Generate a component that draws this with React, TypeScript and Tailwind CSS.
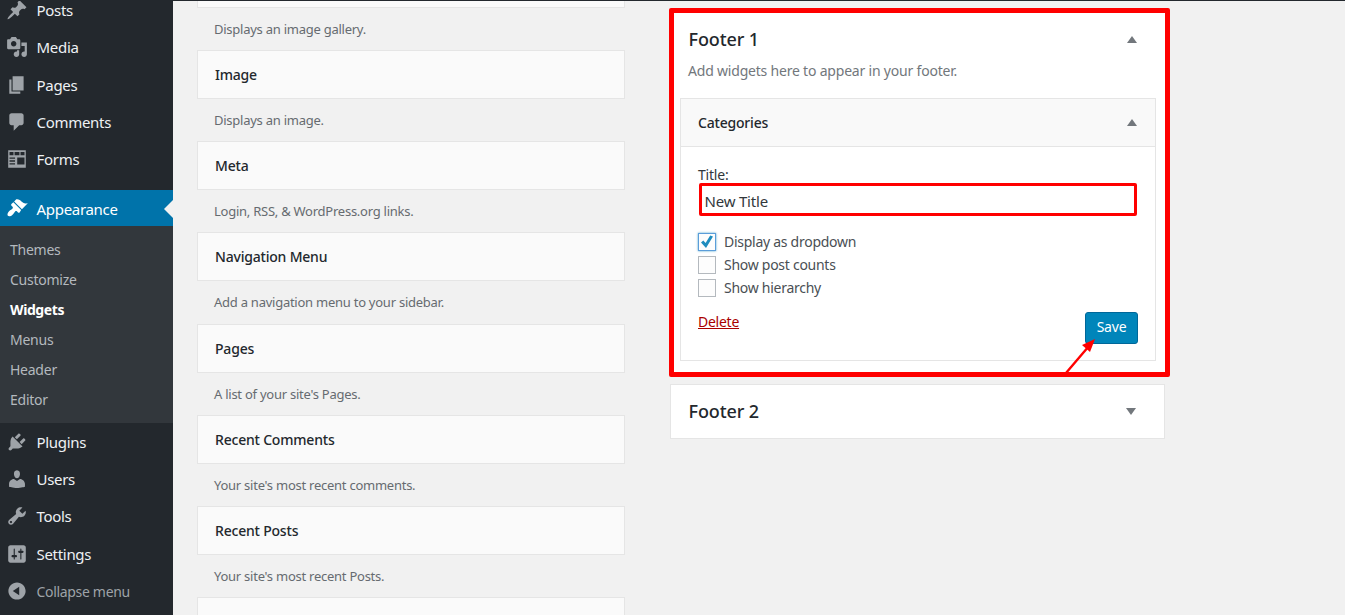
import React from "react";

const icons: Record<string, string> = {
  posts: "M10.44 3.02l1.82-1.82 6.36 6.35-1.83 1.82c-1.05-.68-2.48-.57-3.41.36l-.75.75c-.92.93-1.04 2.35-.35 3.41l-1.83 1.82-2.41-2.41-2.8 2.79c-.42.42-3.38 2.71-3.8 2.29s1.86-3.39 2.28-3.81l2.79-2.79L4.1 9.36l1.83-1.82c1.05.69 2.48.57 3.4-.36l.75-.75c.93-.92 1.05-2.35.36-3.41z",
  media: "M13 11V4c0-.55-.45-1-1-1h-1.67L9 1H5L3.67 3H2c-.55 0-1 .45-1 1v7c0 .55.45 1 1 1h10c.55 0 1-.45 1-1zM7 4.5c1.38 0 2.5 1.12 2.5 2.5S8.38 9.5 7 9.5 4.5 8.38 4.5 7 5.62 4.5 7 4.5zM14 6h5v10.5c0 1.38-1.12 2.5-2.5 2.5S14 17.88 14 16.5s1.12-2.5 2.5-2.5c.17 0 .34.02.5.05V9h-3V6zm-4 8.05V13h2v3.5c0 1.38-1.12 2.5-2.5 2.5S7 17.88 7 16.5 8.12 14 9.5 14c.17 0 .34.02.5.05z",
  pages: "M6 15V2h10v13H6zm-1 1h8v2H3V5h2v11z",
  comments: "M5 2h9c1.1 0 2 .9 2 2v7c0 1.1-.9 2-2 2h-2l-5 5v-5H5c-1.1 0-2-.9-2-2V4c0-1.1.9-2 2-2z",
  forms: "M2 2h16v16H2V2zm1.2 1.6v3h3.6v-3H3.2zm4.6 0v3h4.4v-3H7.8zm5.4 0v3h3.6v-3h-3.6zM3.2 8.6v1.2h5V8.6h-5zm0 2.6v1.2h5v-1.2h-5zm0 2.6V15h5v-1.2h-5zm7-5.2v6.4h6.6V8.6h-6.6z",
  appearance: "M14.48 11.06L7.41 3.99l1.5-1.5c.5-.56 2.3-.47 3.51.32 1.21.8 1.43 1.28 2.91 2.1 1.18.64 2.45 1.26 4.45.85zm-.71.71L6.7 4.7 4.93 6.47c-.39.39-.39 1.02 0 1.41l1.06 1.06c.39.39.39 1.03 0 1.42-.6.6-1.43 1.11-2.21 1.69-.35.26-.7.53-1.01.84-1.34 1.34-1.86 3.35-1.02 4.23.84.88 2.86.35 4.19-.98.31-.31.58-.66.84-1.01.58-.78 1.09-1.61 1.69-2.21.39-.39 1.03-.39 1.42 0l1.06 1.06c.39.39 1.02.39 1.41 0z",
  plugins: "M13.11 4.36L9.87 7.6 8 5.73l3.24-3.24c.35-.34 1.05-.2 1.56.32.52.51.66 1.21.31 1.55zm-8 1.77l.91-1.12 9.01 9.01-1.19.84c-.71.71-2.63 1.16-3.82 1.16H6.14L4.9 17.26c-.59.59-1.54.59-2.12 0-.59-.58-.59-1.53 0-2.12l1.24-1.24v-3.88c0-1.13.4-3.19 1.09-3.89zm7.26 3.97l3.24-3.24c.34-.35 1.04-.21 1.55.31.52.51.66 1.21.31 1.55l-3.24 3.25z",
  users: "M10 9.25c-2.27 0-2.73-3.44-2.73-3.44C7 4.02 7.82 2 9.97 2c2.16 0 2.98 2.02 2.71 3.81 0 0-.41 3.44-2.68 3.44zm0 2.57L12.72 10c2.39 0 4.52 2.33 4.52 4.53v2.49s-3.65 1.13-7.24 1.13c-3.65 0-7.24-1.13-7.24-1.13v-2.49c0-2.25 1.94-4.48 4.47-4.48z",
  tools: "M16.68 9.77c-1.34 1.34-3.3 1.67-4.95.99l-5.41 6.52c-.99.99-2.59.99-3.58 0s-.99-2.59 0-3.57l6.52-5.42c-.68-1.65-.35-3.61.99-4.95 1.28-1.28 3.12-1.62 4.72-1.06l-2.89 2.89 2.82 2.82 2.86-2.87c.53 1.58.18 3.39-1.08 4.65zM3.81 16.21c.4.39 1.04.39 1.43 0 .4-.4.4-1.04 0-1.43-.39-.4-1.03-.4-1.43 0-.39.39-.39 1.03 0 1.43z",
  settings: "M18 16V4c0-1.1-.9-2-2-2H4c-1.1 0-2 .9-2 2v12c0 1.1.9 2 2 2h12c1.1 0 2-.9 2-2zM8 11h1c.55 0 1 .45 1 1s-.45 1-1 1H8v1.5c0 .28-.22.5-.5.5s-.5-.22-.5-.5V13H6c-.55 0-1-.45-1-1s.45-1 1-1h1V5.5c0-.28.22-.5.5-.5s.5.22.5.5V11zm5-2h-1c-.55 0-1-.45-1-1s.45-1 1-1h1V5.5c0-.28.22-.5.5-.5s.5.22.5.5V7h1c.55 0 1 .45 1 1s-.45 1-1 1h-1v5.5c0 .28-.22.5-.5.5s-.5-.22-.5-.5V9z",
  collapse: "M10 2.16c4.33 0 7.84 3.51 7.84 7.84s-3.51 7.84-7.84 7.84S2.16 14.33 2.16 10 5.71 2.16 10 2.16zm2 11.72V6.12L6.18 9.97z",
};

function Dash({ name, className }: { name: string; className: string }) {
  return (
    <svg viewBox="0 0 20 20" className={`ml-[6px] mr-[8.5px] h-[22px] w-[22px] shrink-0 fill-current ${className}`}>
      <path fillRule="evenodd" d={icons[name]} />
    </svg>
  );
}

function MenuRow({ icon, label }: { icon: string; label: string }) {
  return (
    <div className="flex h-[37.3px] items-center text-[15px] leading-[18px] tracking-[-0.3px] text-[#eef1f4]">
      <Dash name={icon} className="text-[#9ea3a8]" />
      <span>{label}</span>
    </div>
  );
}

function Caret({ up = true }: { up?: boolean }) {
  return (
    <svg viewBox="0 0 10 7" className="h-[7px] w-[10px] fill-[#72777c]">
      <polygon points={up ? "5,0 10,7 0,7" : "0,0 10,0 5,7"} />
    </svg>
  );
}

function WidgetCard({ title, desc }: { title: string; desc: string }) {
  return (
    <>
      <div className="flex h-[49px] items-center border border-[#e5e5e5] bg-[#fafafa] pl-[17px] text-[14px] font-medium tracking-[-0.2px] text-[#23282d]">
        {title}
      </div>
      <div className="flex h-[42.2px] items-center pl-[17px] pt-[1px] text-[13px] tracking-[-0.25px] text-[#666b70]">{desc}</div>
    </>
  );
}

function Check({ label, checked = false }: { label: string; checked?: boolean }) {
  return (
    <div className="flex h-[18px] items-center gap-[8px] text-[14px] tracking-[-0.27px] text-[#4a4f54]">
      <span
        className={`flex h-[18px] w-[18px] items-center justify-center border bg-[#fdfdfd] ${
          checked ? "border-[#5b9dd9] shadow-[0_0_2px_rgba(30,140,190,0.8)]" : "border-[#b4b9be]"
        }`}
      >
        {checked && (
          <svg viewBox="0 0 16 16" className="h-[16px] w-[16px] fill-[#1e8cbe]">
            <path d="M14 2.6 7 14 2 8.4l2.3-1.9 2.3 2.5 4.6-7.6z" />
          </svg>
        )}
      </span>
      <span className="pb-[1px]">{label}</span>
    </div>
  );
}

const cards = [
  ["Image", "Displays an image."],
  ["Meta", "Login, RSS, & WordPress.org links."],
  ["Navigation Menu", "Add a navigation menu to your sidebar."],
  ["Pages", "A list of your site's Pages."],
  ["Recent Comments", "Your site's most recent comments."],
  ["Recent Posts", "Your site's most recent Posts."],
];

export default function App() {
  return (
    <div className="flex h-[615px] w-[1345px] flex-col overflow-hidden bg-[#f1f1f1] font-['Noto_Sans','Open_Sans',sans-serif]">
      <div className="h-[1px] shrink-0 bg-[#23282d]" />
      <div className="flex min-h-0 flex-1">
        <aside className="w-[173px] shrink-0 overflow-hidden bg-[#23282d]">
          <div className="-mt-[9.5px]">
            <MenuRow icon="posts" label="Posts" />
            <MenuRow icon="media" label="Media" />
            <MenuRow icon="pages" label="Pages" />
            <MenuRow icon="comments" label="Comments" />
            <MenuRow icon="forms" label="Forms" />
            <div className="relative mt-[11.7px] flex h-[36px] items-center bg-[#0073aa] text-[15px] tracking-[-0.3px] text-white">
              <Dash name="appearance" className="text-white" />
              <span className="pt-[3px]">Appearance</span>
              <span className="absolute right-0 top-[10px] h-0 w-0 border-y-[9px] border-r-[9px] border-y-transparent border-r-[#f1f1f1]" />
            </div>
            <div className="flex flex-col bg-[#32373c] pb-[8px] pt-[9px] text-[14px] tracking-[-0.25px] text-[#b4b9be]">
              {["Themes", "Customize", "Widgets", "Menus", "Header", "Editor"].map((s) => (
                <div key={s} className={`flex h-[30px] items-center pl-[10px] ${s === "Widgets" ? "font-bold tracking-[-0.4px] text-white" : ""}`}>
                  {s}
                </div>
              ))}
            </div>
            <div className="pt-[0.5px]">
              <MenuRow icon="plugins" label="Plugins" />
              <MenuRow icon="users" label="Users" />
              <MenuRow icon="tools" label="Tools" />
              <MenuRow icon="settings" label="Settings" />
            </div>
            <div className="flex h-[37.3px] items-center text-[14px] tracking-[-0.32px] text-[#9ea3a8]">
              <Dash name="collapse" className="text-[#9ea3a8]" />
              <span>Collapse menu</span>
            </div>
          </div>
        </aside>

        <section className="ml-[24px] w-[428px] shrink-0">
          <div className="h-[6.5px] border border-t-0 border-[#e5e5e5] bg-[#fafafa]" />
          <div className="flex h-[42.6px] items-center pl-[17px] pt-[1px] text-[13px] tracking-[-0.25px] text-[#666b70]">Displays an image gallery.</div>
          {cards.map(([t, d]) => (
            <WidgetCard key={t} title={t} desc={d} />
          ))}
          <div className="h-[40px] border border-[#e5e5e5] bg-[#fafafa]" />
        </section>

        <section className="relative ml-[44px] mt-[7px] w-[501px] shrink-0">
          <div className="h-[369px] rounded-[2px] border-[5px] border-[#ff0000] bg-white">
            <div className="flex h-[48px] items-center justify-between pl-[14.5px] pr-[28px] pt-[5px] text-[18px] font-medium tracking-[-0.1px] text-[#23282d]">
              <span>Footer 1</span>
              <Caret />
            </div>
            <div className="flex h-[20px] items-center pb-[1px] pl-[14px] text-[14px] tracking-[-0.2px] text-[#72777c]">Add widgets here to appear in your footer.</div>
            <div className="ml-[6px] mt-[17px] h-[263px] w-[476px] border border-[#e5e5e5]">
              <div className="flex h-[48px] items-center justify-between border-b border-[#e5e5e5] bg-[#f9f9f9] pl-[17px] pr-[18px] text-[14px] font-medium tracking-[-0.2px] text-[#23282d]">
                <span className="pb-[1px]">Categories</span>
                <Caret />
              </div>
              <div className="px-[17px] pt-[18px]">
                <div className="h-[18px] text-[14px] leading-[20px] tracking-[-0.2px] text-[#32373c]">Title:</div>
                <div className="ml-[1px] flex h-[33px] w-[438px] items-center rounded-[2px] border-[3px] border-[#ff0000] bg-white pl-[2.5px] pt-[3px] text-[15px] tracking-[-0.2px] text-[#32373c]">
                  New Title
                </div>
                <div className="mt-[17px] flex flex-col gap-[5px]">
                  <Check label="Display as dropdown" checked />
                  <Check label="Show post counts" />
                  <Check label="Show hierarchy" />
                </div>
                <div className="mt-[15px] flex items-start justify-between">
                  <a className="text-[14px] leading-[20px] tracking-[-0.25px] text-[#aa0000] underline">Delete</a>
                  <button className="h-[32px] w-[53px] rounded-[3px] border border-[#006799] bg-[#0085ba] pb-[3px] text-[14px] tracking-[-0.2px] text-white">
                    Save
                  </button>
                </div>
              </div>
            </div>
          </div>
          <div className="ml-[1px] mt-[7px] flex h-[55px] w-[495px] items-center justify-between border border-[#e5e5e5] bg-white pl-[17.5px] pr-[28px] text-[18px] font-medium tracking-[-0.1px] text-[#23282d]">
            <span>Footer 2</span>
            <Caret up={false} />
          </div>
          <svg viewBox="0 0 40 44" className="absolute left-[394px] top-[322px] h-[44px] w-[40px]">
            <line x1="3" y1="43" x2="26" y2="16" stroke="#ff0000" strokeWidth="2.4" strokeLinecap="round" />
            <polygon points="32,9 27,22 19,15" fill="#ff0000" />
          </svg>
        </section>
      </div>
    </div>
  );
}
